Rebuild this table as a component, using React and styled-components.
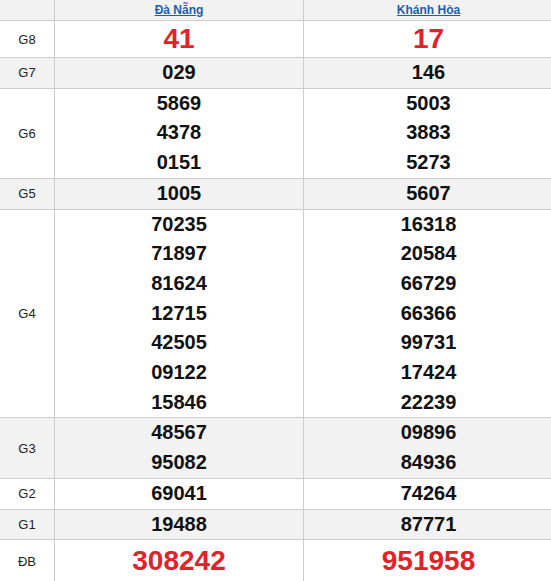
import React from "react";
import styled, { createGlobalStyle } from "styled-components";

const Global = createGlobalStyle`
  html, body { margin: 0; padding: 0; background: #fff; overflow: hidden; }
  body { font-family: "Liberation Sans", Arial, sans-serif; }
`;

const Wrap = styled.div`
  width: 551px;
  overflow: hidden;
`;

const Table = styled.table`
  border-collapse: collapse;
  table-layout: fixed;
  width: 554px;
  margin-left: -1px;
  margin-top: -1px;
  font-family: "Liberation Sans", Arial, sans-serif;
`;

const Row = styled.tr`
  background: ${(p) => (p.$alt ? "#f2f2f2" : "#fff")};
`;

const HeadCell = styled.th`
  border: 1px solid #cccccc;
  height: 20px;
  padding: 0;
  font-size: 12px;
  font-weight: bold;
  text-align: center;
  vertical-align: middle;
  background: #f2f2f2;
`;

const HeadLink = styled.a`
  color: #1d5fa8;
  text-decoration: underline;
`;

const Label = styled.td`
  border: 1px solid #cccccc;
  padding: 0 0 ${(p) => p.$pb || "0"} 0;
  text-align: center;
  vertical-align: middle;
  font-size: 13px;
  color: #222;
`;

const Cell = styled.td`
  border: 1px solid #cccccc;
  padding: 0 0 ${(p) => p.$pb || "0"} 0;
  text-align: center;
  vertical-align: middle;
  height: ${(p) => p.$h || "auto"};
`;

const Num = styled.div`
  font-size: ${(p) => (p.$big ? "28px" : "20px")};
  font-weight: bold;
  line-height: ${(p) => (p.$big ? "36px" : "29.7px")};
  color: ${(p) => (p.$big ? "#e32129" : "#111")};
`;

const rows = [
  { g: "G8", a: ["41"], b: ["17"], big: true, h: "36px" },
  { g: "G7", a: ["029"], b: ["146"], alt: true },
  { g: "G6", a: ["5869", "4378", "0151"], b: ["5003", "3883", "5273"] },
  { g: "G5", a: ["1005"], b: ["5607"], alt: true },
  {
    g: "G4",
    a: ["70235", "71897", "81624", "12715", "42505", "09122", "15846"],
    b: ["16318", "20584", "66729", "66366", "99731", "17424", "22239"],
  },
  { g: "G3", a: ["48567", "95082"], b: ["09896", "84936"], alt: true },
  { g: "G2", a: ["69041"], b: ["74264"] },
  { g: "G1", a: ["19488"], b: ["87771"], alt: true },
  { g: "ĐB", a: ["308242"], b: ["951958"], big: true, h: "42px", pb: "6px" },
];

export default function App() {
  return (
    <Wrap>
      <Global />
      <Table>
        <colgroup>
          <col style={{ width: "55px" }} />
          <col style={{ width: "249px" }} />
          <col style={{ width: "250px" }} />
        </colgroup>
        <thead>
          <tr>
            <HeadCell />
            <HeadCell>
              <HeadLink href="#">Đà Nẵng</HeadLink>
            </HeadCell>
            <HeadCell>
              <HeadLink href="#">Khánh Hòa</HeadLink>
            </HeadCell>
          </tr>
        </thead>
        <tbody>
          {rows.map((r) => (
            <Row key={r.g} $alt={r.alt}>
              <Label $pb={r.pb}>{r.g}</Label>
              <Cell $h={r.h} $pb={r.pb}>
                {r.a.map((n, i) => (
                  <Num key={i} $big={r.big}>{n}</Num>
                ))}
              </Cell>
              <Cell $h={r.h} $pb={r.pb}>
                {r.b.map((n, i) => (
                  <Num key={i} $big={r.big}>{n}</Num>
                ))}
              </Cell>
            </Row>
          ))}
        </tbody>
      </Table>
    </Wrap>
  );
}
